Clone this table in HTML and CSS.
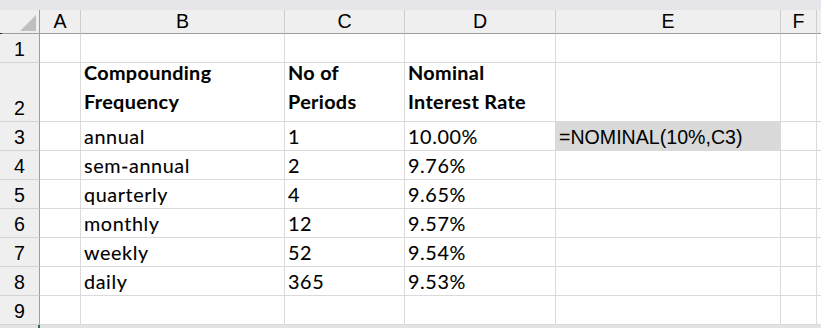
FILE: index.html
```html
<!DOCTYPE html>
<html>
<head>
<meta charset="utf-8">
<link rel="stylesheet" href="styles.css">
</head>
<body>
<div class="topbar"></div>
<div class="sheet">
  <div class="corner"><svg class="tri" width="38" height="23" viewBox="0 0 38 23"><polygon points="36,5 36,21 20,21" fill="#bfbfbf"/></svg></div>
  <div class="colhdr">A</div>
  <div class="colhdr">B</div>
  <div class="colhdr">C</div>
  <div class="colhdr">D</div>
  <div class="colhdr">E</div>
  <div class="colhdr">F</div>
  <div class="colhdr last"></div>

  <div class="rowhdr">1</div>
  <div class="cell"></div><div class="cell"></div><div class="cell"></div><div class="cell"></div><div class="cell"></div><div class="cell"></div><div class="cell last"></div>

  <div class="rowhdr">2</div>
  <div class="cell"></div>
  <div class="cell head"><div>Compounding<br>Frequency</div></div>
  <div class="cell head"><div>No of<br>Periods</div></div>
  <div class="cell head"><div>Nominal<br>Interest Rate</div></div>
  <div class="cell"></div><div class="cell"></div><div class="cell last"></div>

  <div class="rowhdr">3</div>
  <div class="cell"></div>
  <div class="cell">annual</div>
  <div class="cell">1</div>
  <div class="cell">10.00%</div>
  <div class="cell formula">=NOMINAL(10%,C3)</div>
  <div class="cell"></div><div class="cell last"></div>

  <div class="rowhdr">4</div>
  <div class="cell"></div>
  <div class="cell">sem-annual</div>
  <div class="cell">2</div>
  <div class="cell">9.76%</div>
  <div class="cell"></div><div class="cell"></div><div class="cell last"></div>

  <div class="rowhdr">5</div>
  <div class="cell"></div>
  <div class="cell">quarterly</div>
  <div class="cell">4</div>
  <div class="cell">9.65%</div>
  <div class="cell"></div><div class="cell"></div><div class="cell last"></div>

  <div class="rowhdr">6</div>
  <div class="cell"></div>
  <div class="cell">monthly</div>
  <div class="cell">12</div>
  <div class="cell">9.57%</div>
  <div class="cell"></div><div class="cell"></div><div class="cell last"></div>

  <div class="rowhdr">7</div>
  <div class="cell"></div>
  <div class="cell">weekly</div>
  <div class="cell">52</div>
  <div class="cell">9.54%</div>
  <div class="cell"></div><div class="cell"></div><div class="cell last"></div>

  <div class="rowhdr">8</div>
  <div class="cell"></div>
  <div class="cell">daily</div>
  <div class="cell">365</div>
  <div class="cell">9.53%</div>
  <div class="cell"></div><div class="cell"></div><div class="cell last"></div>

  <div class="rowhdr">9</div>
  <div class="cell"></div><div class="cell"></div><div class="cell"></div><div class="cell"></div><div class="cell"></div><div class="cell"></div><div class="cell last"></div>
</div>
<div class="bottombar"><div class="greenmark"></div></div>
</body>
</html>
```

FILE: styles.css
```css
html, body {
  margin: 0;
  padding: 0;
  background: #ffffff;
  width: 821px;
  height: 328px;
  overflow: hidden;
}

.topbar {
  height: 10px;
  background: #e6e5ea;
}

.sheet {
  display: grid;
  grid-template-columns: 40px 41px 204px 120px 151px 225px 36px 1fr;
  grid-template-rows: 24px 29px 59px repeat(7, 29px);
}

.sheet > div {
  box-sizing: border-box;
  border-right: 1px solid #dadada;
  border-bottom: 1px solid #dadada;
  white-space: nowrap;
  overflow: visible;
}

.corner {
  position: relative;
  background: #efefef;
  border-right-color: #9e9e9e !important;
  border-bottom-color: #9e9e9e !important;
}

.corner::before {
  content: "";
  position: absolute;
  left: 0;
  bottom: -1px;
  width: 2px;
  height: 1px;
  background: #222;
}

.tri {
  display: block;
}

.colhdr {
  background: #efefef;
  border-right-color: #cdcdcd !important;
  border-bottom-color: #9e9e9e !important;
  font-family: "Liberation Sans", Arial, sans-serif;
  font-size: 19.6px;
  line-height: 23px;
  text-align: center;
  color: #000;
}

.colhdr.last {
  border-right: none !important;
}

.rowhdr {
  background: #efefef;
  border-right-color: #9e9e9e !important;
  border-bottom-color: #d4d4d4 !important;
  font-family: "Liberation Sans", Arial, sans-serif;
  font-size: 19.6px;
  line-height: 22px;
  display: flex;
  align-items: flex-end;
  justify-content: center;
  padding-bottom: 2px;
  color: #000;
}

.cell {
  background: #ffffff;
  font-family: Lato, "Open Sans", sans-serif;
  font-size: 19.8px;
  letter-spacing: 0.6px;
  line-height: 23.4px;
  display: flex;
  align-items: flex-end;
  padding-left: 3px;
  padding-bottom: 2px;
  color: #000;
  -webkit-text-stroke: 0.1px #000;
}

.cell.last {
  border-right: none;
}

.cell.head {
  font-weight: 700;
  line-height: 29px;
  padding-bottom: 5px;
  letter-spacing: 0.35px;
  -webkit-text-stroke: 0.1px #000;
}

.cell.formula {
  background: #d9d9d9;
  font-family: "Liberation Sans", Arial, sans-serif;
  font-size: 19.6px;
  letter-spacing: 0;
  line-height: 22px;
  padding-left: 3px;
  -webkit-text-stroke: 0;
}

.bottombar {
  height: 3px;
  background: #e3e3e3;
  display: flex;
}

.greenmark {
  margin-left: 38px;
  width: 2px;
  height: 3px;
  background: #217346;
}
```
